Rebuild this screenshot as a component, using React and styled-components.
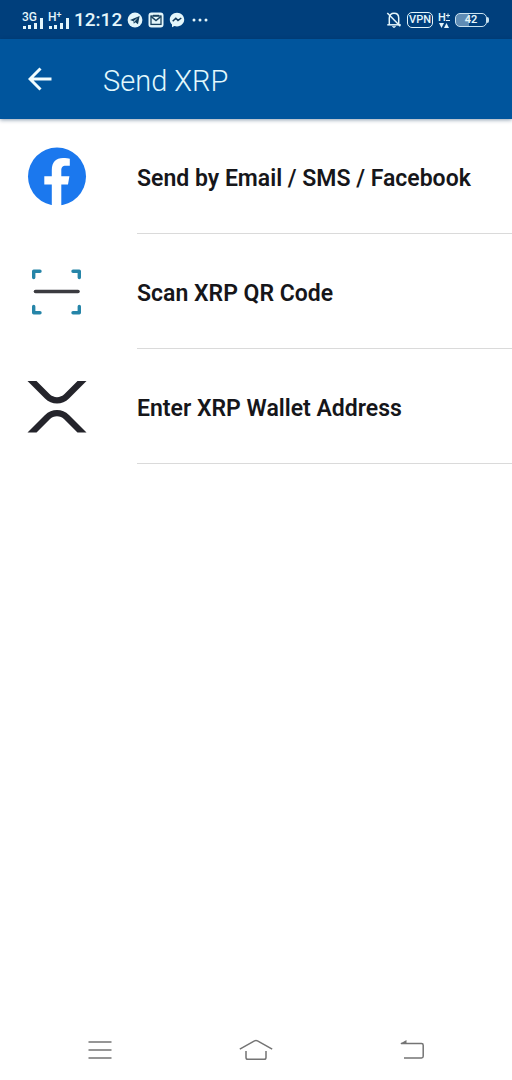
import React from 'react';
import styled, { createGlobalStyle } from 'styled-components';

const GlobalStyle = createGlobalStyle`
    * {
        box-sizing: border-box;
    }

    body {
        margin: 0;
        background-color: #ffffff;
        font-family: Roboto, "Noto Sans", sans-serif;
    }
    `;

const Page = styled.div`
    display: flex;
    flex-direction: column;
    min-height: 100vh;
    background-color: #ffffff;
    `;

const StatusBar = styled.div`
    display: flex;
    justify-content: space-between;
    align-items: center;
    height: 39px;
    padding: 0 23px 0 22px;
    background-color: #003f7c;
    color: #e4f6fb;
    `;

const StatusGroup = styled.div`
    display: flex;
    align-items: center;
    gap: 5px;

    svg {
        display: block;
    }
    `;

const Signal = styled.div`
    position: relative;
    width: 21px;
    height: 18px;
    `;

const SignalLabel = styled.span`
    position: absolute;
    top: 0;
    left: 0;
    font-size: 12px;
    line-height: 12px;
    font-weight: 500;

    sup {
        font-size: 9px;
        line-height: 1px;
        vertical-align: 3px;
    }
    `;

const Clock = styled.time`
    font-size: 19px;
    line-height: 24px;
    font-weight: 500;
    `;

const VpnBadge = styled.span`
    display: flex;
    align-items: center;
    justify-content: center;
    width: 26px;
    height: 16px;
    border: 1px solid #e4f6fb;
    border-radius: 5px;
    font-size: 11px;
    line-height: 12px;
    font-weight: 500;
    `;

const DataMark = styled.span`
    display: flex;
    flex-direction: column;
    align-items: center;
    width: 12px;
    font-size: 11px;
    line-height: 11px;
    font-weight: 500;
    `;

const DataRow = styled.span`
    display: flex;
    align-items: center;
    `;

const Battery = styled.div`
    display: flex;
    align-items: center;
    `;

const BatteryBody = styled.span`
    width: 32px;
    height: 14px;
    border: 1px solid #c9e2f0;
    border-radius: 5px;
    background: linear-gradient(to right, #5f8cb5 42%, transparent 42%);
    font-size: 11px;
    line-height: 12px;
    font-weight: 600;
    text-align: center;
    `;

const BatteryTip = styled.span`
    width: 2px;
    height: 6px;
    border-radius: 0 2px 2px 0;
    background-color: #c9e2f0;
    `;

const Header = styled.header`
    display: flex;
    align-items: center;
    height: 80px;
    padding: 0 24px;
    gap: 47px;
    background-color: #00559d;
    box-shadow: 0 1px 4px rgba(0, 40, 80, 0.45);
    `;

const BackButton = styled.button`
    display: flex;
    align-items: center;
    justify-content: center;
    width: 32px;
    height: 32px;
    padding: 0;
    border: none;
    background: none;
    color: #f0fcff;
    cursor: pointer;
    `;

const Title = styled.h1`
    margin: 0;
    padding-top: 3px;
    font-size: 29px;
    line-height: 36px;
    font-weight: 300;
    color: #e2f8fc;
    `;

const OptionList = styled.ul`
    flex: 1;
    margin: 0;
    padding: 0;
    list-style: none;
    `;

const Option = styled.button`
    display: flex;
    align-items: stretch;
    width: 100%;
    height: 115px;
    padding: 0;
    border: none;
    background: none;
    font-family: inherit;
    text-align: left;
    cursor: pointer;
    `;

const OptionIcon = styled.span`
    display: flex;
    align-items: center;
    width: 137px;
    padding-left: 27px;
    flex-shrink: 0;
    `;

const OptionLabel = styled.span`
    display: flex;
    align-items: center;
    flex: 1;
    padding-top: 5px;
    border-bottom: 1px solid #dadada;
    font-size: 23px;
    line-height: 28px;
    font-weight: 600;
    color: #16161a;
    `;

const NavBar = styled.nav`
    display: grid;
    grid-template-columns: repeat(3, 1fr);
    height: 60px;
    padding: 0 22px;
    `;

const NavButton = styled.button`
    display: flex;
    align-items: center;
    justify-content: center;
    padding: 0;
    border: none;
    background: none;
    color: #747474;
    cursor: pointer;
    `;


function SignalBars() {
  return (
    <svg width="21" height="18" viewBox="0 0 21 18" fill="currentColor">
      <rect x="1" y="15" width="3" height="3" />
      <rect x="6" y="14" width="3" height="4" />
      <rect x="12" y="12" width="3" height="6" />
      <rect x="18" y="7" width="3" height="11" />
    </svg>
  );
}

function TelegramIcon() {
  return (
    <svg width="16" height="16" viewBox="0 0 16 16">
      <circle cx="8" cy="8" r="7.4" fill="#e4f6fb" />
      <path d="M3 8 12.6 4 11 12.3 8.2 10.3 6.8 11.8 6.4 9.2Z" fill="#123d5c" />
      <path d="M6.4 9.2 11 5.6 7.4 9.8" fill="#e4f6fb" />
    </svg>
  );
}

function MailIcon() {
  return (
    <svg width="16" height="16" viewBox="0 0 16 16" fill="none">
      <rect x="0.5" y="0.5" width="15" height="15" rx="3" fill="#e4f6fb" />
      <rect x="3" y="4" width="10" height="8.4" stroke="#17415f" strokeWidth="1.3" />
      <path d="M3 4.4 8 8.6 13 4.4" stroke="#17415f" strokeWidth="1.4" />
      <path d="M5 3.6H11" stroke="#17415f" strokeWidth="1.6" />
    </svg>
  );
}

function MessengerIcon() {
  return (
    <svg width="16" height="16" viewBox="0 0 16 16">
      <path d="M8 .8C3.8.8.8 3.8.8 7.6c0 2 .8 3.7 2.2 5v2.6l2.4-1.2c.8.2 1.7.4 2.6.4 4.2 0 7.2-3 7.2-6.8S12.2.8 8 .8Z" fill="#e4f6fb" />
      <path d="M3.7 9.3 6.8 6.2 9 8.4 12.3 6" fill="none" stroke="#12395a" strokeWidth="1.5" />
    </svg>
  );
}

function MoreDots() {
  return (
    <svg width="20" height="6" viewBox="0 0 20 6" fill="currentColor">
      <circle cx="4" cy="3" r="1.5" />
      <circle cx="10" cy="3" r="1.5" />
      <circle cx="16" cy="3" r="1.5" />
    </svg>
  );
}

function MutedBellIcon() {
  return (
    <svg width="16" height="18" viewBox="0 0 16 18" fill="none" stroke="currentColor" strokeWidth="1.5">
      <path d="M3.3 13.5V7C3.3 4 5.3 2.3 8 2.3S12.7 4 12.7 7V13.5" />
      <path d="M1.3 13.8H14.7" />
      <path d="M6.3 15.5H9.7L8 16.8Z" fill="currentColor" strokeWidth="0.6" />
      <path d="M1.3 2 14.3 15.2" />
    </svg>
  );
}

function PlusMinusMark() {
  return (
    <svg width="4" height="9" viewBox="0 0 4 9" fill="none" stroke="currentColor" strokeWidth="1">
      <path d="M0 2.5H4M2 .5V4.5M0 7.5H4" />
    </svg>
  );
}

function DataArrows() {
  return (
    <svg width="10" height="5" viewBox="0 0 10 5" fill="currentColor">
      <path d="M0 0H5L2.5 5Z" />
      <path d="M5 5H10L7.5 0Z" />
    </svg>
  );
}

function ArrowLeftIcon() {
  return (
    <svg width="24" height="24" viewBox="0 0 24 24" fill="none" stroke="currentColor" strokeWidth="3">
      <path d="M23.5 12H2M12.5 1.5 2 12 12.5 22.5" />
    </svg>
  );
}

function FacebookIcon() {
  return (
    <svg width="60" height="60" viewBox="0 0 60 60">
      <circle cx="30" cy="29.500" r="29" fill="#1b78ee" />
      <path
        d="M24.800 60V37.500H17.300V29.300H24.800V23C24.800 15.200 29 11.100 36 11.100C38.700 11.100 41.800 11.500 42.800 11.800V18.800H38.700C35.300 18.800 34.300 20.800 34.300 23.500V29.300H42.400L41 37.500H34.300V60Z"
        fill="#ffffff"
      />
    </svg>
  );
}

function ScanIcon() {
  return (
    <svg width="60" height="60" viewBox="0 0 60 60" fill="none" strokeWidth="3.4">
      <g stroke="#2685a8" strokeLinecap="round" strokeLinejoin="round">
        <path d="M13 9.200H6.700V15.500" />
        <path d="M46 9.200H52.300V15.500" />
        <path d="M13 50.800H6.700V44.500" />
        <path d="M46 50.800H52.300V44.500" />
      </g>
      <path d="M8.500 29.500H51" stroke="#3b3b40" strokeWidth="3.6" strokeLinecap="round" />
    </svg>
  );
}

function XrpIcon() {
  return (
    <svg width="60" height="60" viewBox="0 0 60 60" fill="#24242b">
      <path d="M0.5 4H9.5L22.5 17C26.7 21.2 33.3 21.2 37.5 17L50.5 4H59.5L42 21.5C35.4 28.1 24.6 28.1 18 21.5Z" />
      <path d="M0.5 55.5H9.5L22.5 42.5C26.7 38.3 33.3 38.3 37.5 42.5L50.5 55.5H59.5L42 38C35.4 31.4 24.6 31.4 18 38Z" />
    </svg>
  );
}

function MenuIcon() {
  return (
    <svg width="24" height="22" viewBox="0 0 24 22" fill="none" stroke="currentColor" strokeWidth="1.5">
      <path d="M.5 3H23.5M.5 11H23.5M.5 19H23.5" />
    </svg>
  );
}

function HomeIcon() {
  return (
    <svg width="34" height="22" viewBox="0 0 34 22" fill="none" stroke="currentColor" strokeWidth="1.5">
      <path d="M.8 10.2 15.5 1.8Q17 1 18.5 1.8L33.2 10.2" />
      <path d="M7 12V18.5Q7 20.3 8.8 20.3H25.2Q27 20.3 27 18.5V12" />
    </svg>
  );
}

function ReturnIcon() {
  return (
    <svg width="24" height="22" viewBox="0 0 24 22" fill="none" stroke="currentColor" strokeWidth="1.5">
      <path d="M1 4.5H21.5Q23.2 4.5 23.2 6.2V17.3Q23.2 19 21.5 19H4" />
      <path d="M0 4.8 6.5 1V4.8Z" fill="currentColor" stroke="none" />
    </svg>
  );
}

const options = [
  { id: 'contact', label: 'Send by Email / SMS / Facebook', icon: <FacebookIcon /> },
  { id: 'scan', label: 'Scan XRP QR Code', icon: <ScanIcon /> },
  { id: 'address', label: 'Enter XRP Wallet Address', icon: <XrpIcon /> },
];

function App() {
  return (
    <>
      <GlobalStyle />
      <Page>
        <StatusBar>
          <StatusGroup>
            <Signal>
              <SignalLabel>3G</SignalLabel>
              <SignalBars />
            </Signal>
            <Signal>
              <SignalLabel>H<sup>+</sup></SignalLabel>
              <SignalBars />
            </Signal>
            <Clock>12:12</Clock>
            <TelegramIcon />
            <MailIcon />
            <MessengerIcon />
            <MoreDots />
          </StatusGroup>
          <StatusGroup>
            <MutedBellIcon />
            <VpnBadge>VPN</VpnBadge>
            <DataMark>
              <DataRow>H<PlusMinusMark /></DataRow>
              <DataArrows />
            </DataMark>
            <Battery>
              <BatteryBody>42</BatteryBody>
              <BatteryTip />
            </Battery>
          </StatusGroup>
        </StatusBar>

        <Header>
          <BackButton aria-label="Back">
            <ArrowLeftIcon />
          </BackButton>
          <Title>Send XRP</Title>
        </Header>

        <OptionList>
          {options.map((option) => (
            <li key={option.id}>
              <Option>
                <OptionIcon>{option.icon}</OptionIcon>
                <OptionLabel>{option.label}</OptionLabel>
              </Option>
            </li>
          ))}
        </OptionList>

        <NavBar>
          <NavButton aria-label="Recent apps"><MenuIcon /></NavButton>
          <NavButton aria-label="Home"><HomeIcon /></NavButton>
          <NavButton aria-label="Return"><ReturnIcon /></NavButton>
        </NavBar>
      </Page>
    </>
  );
}

export default App;
